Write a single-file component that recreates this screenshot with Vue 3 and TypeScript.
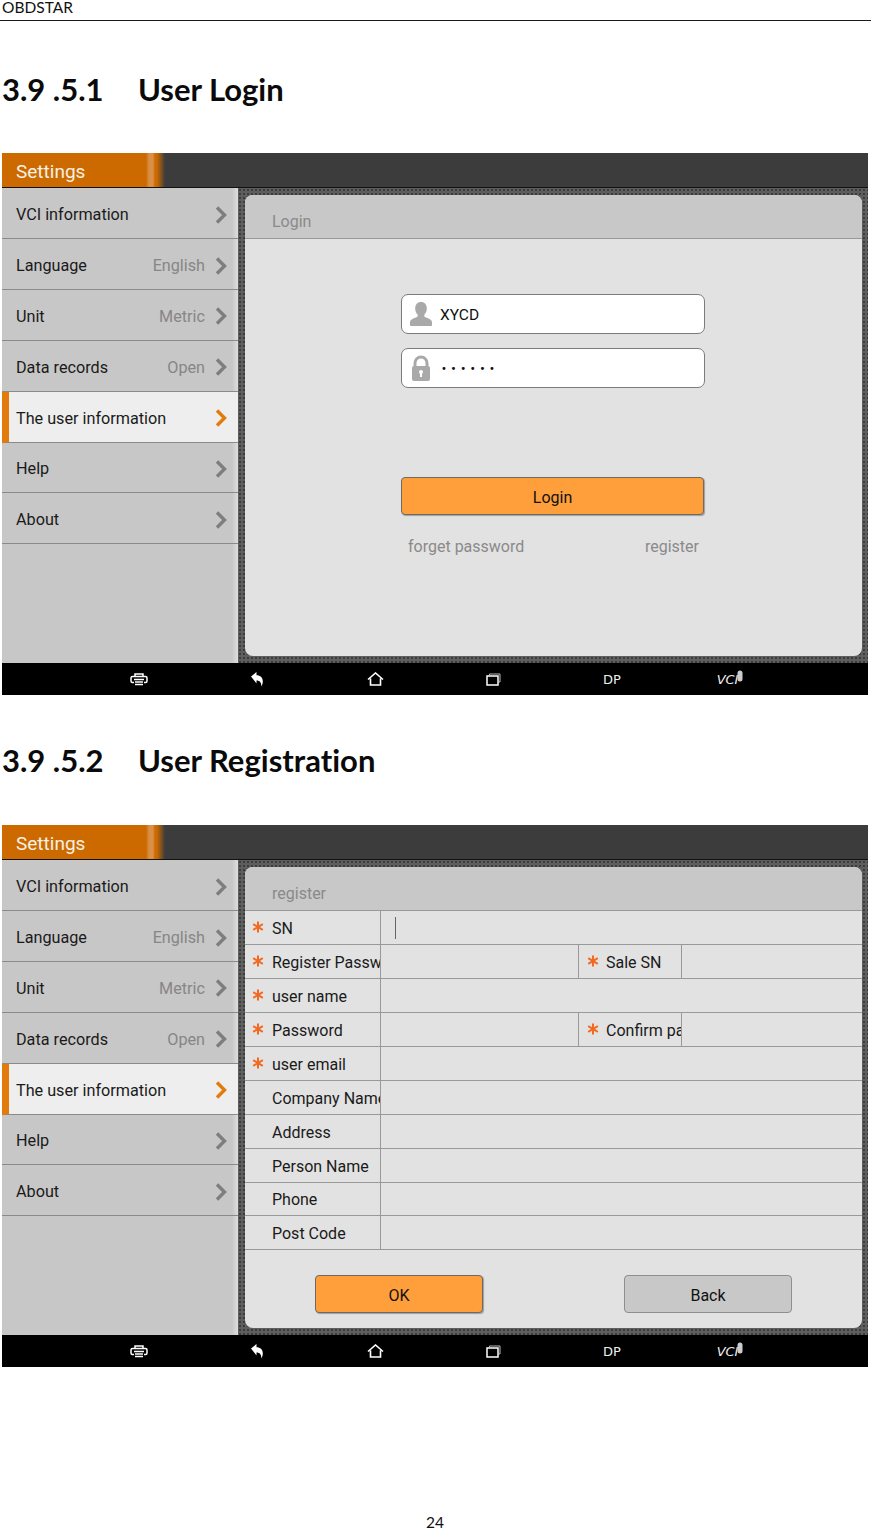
<script setup lang="ts">
interface MenuItem { label: string; value?: string; active?: boolean }
interface FormCell { label: string; required?: boolean }
interface FormRow { cells: FormCell[]; cursor?: boolean }

const menu: MenuItem[] = [
  { label: 'VCI information' },
  { label: 'Language', value: 'English' },
  { label: 'Unit', value: 'Metric' },
  { label: 'Data records', value: 'Open' },
  { label: 'The user information', active: true },
  { label: 'Help' },
  { label: 'About' },
]

const rows: FormRow[] = [
  { cells: [{ label: 'SN', required: true }], cursor: true },
  { cells: [{ label: 'Register Password', required: true }, { label: 'Sale SN', required: true }] },
  { cells: [{ label: 'user name', required: true }] },
  { cells: [{ label: 'Password', required: true }, { label: 'Confirm password', required: true }] },
  { cells: [{ label: 'user email', required: true }] },
  { cells: [{ label: 'Company Name' }] },
  { cells: [{ label: 'Address' }] },
  { cells: [{ label: 'Person Name' }] },
  { cells: [{ label: 'Phone' }] },
  { cells: [{ label: 'Post Code' }] },
]

const sections = [
  { number: '3.9 .5.1', title: 'User Login', kind: 'login' },
  { number: '3.9 .5.2', title: 'User Registration', kind: 'register' },
]
</script>

<template>
  <div class="page">
    <header class="doc-header">OBDSTAR</header>

    <section v-for="s in sections" :key="s.kind" class="section">
      <h2 class="heading"><span class="num">{{ s.number }}</span>{{ s.title }}</h2>

      <div class="screen">
        <div class="titlebar">
          <div class="title-tab">Settings</div>
        </div>

        <div class="main">
          <aside class="sidebar">
            <div v-for="m in menu" :key="m.label" class="menu-row" :class="{ active: m.active }">
              <span class="menu-label">{{ m.label }}</span>
              <span v-if="m.value" class="menu-value">{{ m.value }}</span>
              <svg class="chev" width="12" height="18" viewBox="0 0 12 18">
                <polyline points="2,1.5 9.5,9 2,16.5" fill="none" stroke-width="3.4" />
              </svg>
            </div>
          </aside>

          <div class="content">
            <div class="panel">
              <div class="panel-head">{{ s.kind === 'login' ? 'Login' : 'register' }}</div>

              <div v-if="s.kind === 'login'" class="login">
                <div class="field">
                  <svg width="24" height="26" viewBox="0 0 24 26" class="field-icon">
                    <path d="M12 1c3.700 0 5.800 2.700 5.800 6.400 0 2.600-1 4.900-2.500 6.300v1.800c1.500 1.100 7.700 2.300 7.700 5.700V24c0 .6-.5 1-1 1H2c-.5 0-1-.4-1-1v-2.800c0-3.400 6.200-4.600 7.700-5.700v-1.800C7.200 12.300 6.200 10 6.200 7.400 6.200 3.700 8.300 1 12 1z" fill="#a9a9a9" />
                  </svg>
                  <span class="field-text">XYCD</span>
                </div>
                <div class="field">
                  <svg width="24" height="26" viewBox="0 0 24 26" class="field-icon">
                    <path d="M6 12V8a6 6 0 0 1 12 0v4" fill="none" stroke="#a9a9a9" stroke-width="3" />
                    <rect x="3" y="11" width="18" height="15" rx="2" fill="#a9a9a9" />
                    <circle cx="12" cy="17" r="2" fill="#fff" />
                    <rect x="11" y="17" width="2" height="5" fill="#fff" />
                  </svg>
                  <span class="field-dots">••••••</span>
                </div>
                <button class="btn btn-orange login-btn" type="button">Login</button>
                <div class="login-links">
                  <span>forget password</span>
                  <span>register</span>
                </div>
              </div>

              <div v-else class="register">
                <div v-for="r in rows" :key="r.cells[0].label" class="form-row">
                  <template v-for="(c, i) in r.cells" :key="c.label">
                    <div class="form-label" :class="i === 1 ? 'second' : 'first'">
                      <svg v-if="c.required" class="star" width="12" height="12" viewBox="0 0 12 12">
                        <path d="M6 .5v11M1.200 3.200l9.600 5.600M10.800 3.200L1.200 8.800" stroke="#f26a21" stroke-width="2" fill="none" />
                      </svg>
                      <span class="form-text">{{ c.label }}</span>
                    </div>
                    <div class="form-value" :class="{ narrow: r.cells.length > 1 && i === 0 }">
                      <i v-if="r.cursor" class="cursor"></i>
                    </div>
                  </template>
                </div>
                <div class="form-actions">
                  <button class="btn btn-orange" type="button">OK</button>
                  <button class="btn btn-gray" type="button">Back</button>
                </div>
              </div>
            </div>
          </div>
        </div>

        <nav class="navbar">
          <svg width="18" height="14" viewBox="0 0 18 14">
            <path d="M5 4V2h8v2M2.500 4.500h13c1 0 1.500 .6 1.500 1.500v3c0 1-.5 1.500-1.500 1.500H14M4 10.500H2.500C1.500 10.500 1 10 1 9V6c0-.9.5-1.500 1.500-1.500M4 7.500h10M5 10h8M5 12.500h8" fill="none" stroke="#fff" stroke-width="1.500" />
          </svg>
          <svg width="14" height="16" viewBox="0 0 14 16">
            <path d="M1 5.500L6.500 1v3.200c3.800 0 6.300 2.300 6.300 6 0 2-.5 3.600-1.500 5.300.2-3.600-1.200-6-4.800-6V12.500z" fill="#fff" />
          </svg>
          <svg width="17" height="14" viewBox="0 0 17 14">
            <path d="M1 7.500L8.500 1 16 7.500M3.500 6.500v6.500h10V6.500" fill="none" stroke="#fff" stroke-width="1.600" />
          </svg>
          <svg width="15" height="13" viewBox="0 0 15 13">
            <path d="M3.500 2.500V1h10.500v8h-1.500" fill="none" stroke="#bbb" stroke-width="1" />
            <rect x="1" y="3" width="11" height="9" fill="none" stroke="#fff" stroke-width="1.500" />
          </svg>
          <span class="nav-dp">DP</span>
          <span class="nav-vci">VCI<svg width="6" height="12" viewBox="0 0 6 12" class="mic"><rect x=".5" y=".5" width="5" height="11" rx="2.500" fill="#ccc" /></svg></span>
        </nav>
      </div>
    </section>

    <footer class="doc-footer">24</footer>
  </div>
</template>

<style>
html, body { margin: 0; background: #fff; }
</style>

<style scoped>
.page {
  width: 871px;
  height: 1528px;
  display: flex;
  flex-direction: column;
  background: #fff;
  overflow: hidden;
  font-family: Roboto, "Liberation Sans", sans-serif;
}
.doc-header {
  height: 20px;
  box-sizing: content-box;
  border-bottom: 1px solid #1a1a1a;
  padding-left: 2px;
  font: 15.500px/14px Lato, sans-serif;
  color: #111;
}
.heading {
  margin: 0;
  height: 132px;
  box-sizing: border-box;
  padding: 49px 0 0 2px;
  font: 700 31px/38px Lato, sans-serif;
  font-variant-ligatures: none;
  color: #0a0a0a;
  display: flex;
}
.section + .section .heading {
  height: 130px;
  padding-top: 46px;
}
.num { width: 136px; }
.screen {
  margin-left: 2px;
  width: 866px;
  height: 542px;
  display: flex;
  flex-direction: column;
}
.titlebar {
  height: 35px;
  flex: none;
  box-sizing: border-box;
  border-bottom: 1px solid #111;
  background: #3c3c3c;
}
.title-tab {
  width: 164px;
  height: 34px;
  box-sizing: border-box;
  padding-left: 14px;
  font-size: 19px;
  line-height: 38px;
  color: #f6f0e6;
  background: linear-gradient(to right, #cc6a00 0, #cc6a00 144px, #d98f45 147px, #d98f45 151px, #cc6a00 153px, #cc6a00 155px, #3c3c3c 163px);
}
.main {
  flex: 1;
  min-height: 0;
  display: flex;
}
.sidebar {
  width: 236px;
  flex: none;
  box-sizing: border-box;
  padding-top: .4px;
  background: linear-gradient(to right, #c8c7c7 230px, #dedede 236px);
}
.menu-row {
  height: 50.830px;
  box-sizing: border-box;
  border-bottom: 1px solid #8b8b8b;
  padding: 3px 11px 0 14px;
  display: flex;
  align-items: center;
  font-size: 16.200px;
  color: #1a1a1a;
}
.menu-label { flex: 1; white-space: nowrap; }
.menu-value { color: #868686; margin-right: 10px; }
.chev { stroke: #7e7e7e; flex: none; }
.menu-row.active {
  background: #eeeeee;
  border-left: 7px solid #e27a0c;
  padding-left: 7px;
}
.active .chev { stroke: #e27a0c; }
.content {
  flex: 1;
  padding: 7px 6px 7px 7px;
  background-color: #5e5e5e;
  background-image: radial-gradient(circle at 2px 2px, #3c3c3c 1.2px, transparent 1.5px);
  background-size: 4px 4px;
  display: flex;
}
.panel {
  flex: 1;
  background: #e2e2e2;
  border-radius: 8px;
  overflow: hidden;
  display: flex;
  flex-direction: column;
}
.panel-head {
  height: 44px;
  flex: none;
  box-sizing: border-box;
  background: #c8c8c8;
  border-bottom: 1px solid #999;
  padding: 17px 0 0 27px;
  font-size: 16px;
  line-height: 20px;
  color: #8a8a8a;
}
.login {
  display: flex;
  flex-direction: column;
  padding: 55px 157px 0 156px;
}
.field {
  height: 40px;
  box-sizing: border-box;
  margin-bottom: 14px;
  border: 1px solid #7b7b7b;
  border-radius: 7px;
  background: #fff;
  display: flex;
  align-items: center;
  padding-left: 7px;
}
.field-icon { flex: none; }
.field-text {
  margin-left: 7px;
  padding-top: 1px;
  font-size: 15.500px;
  color: #111;
}
.field-dots {
  margin-left: 8px;
  font-family: "DejaVu Sans", sans-serif;
  font-size: 10px;
  letter-spacing: 3.700px;
  color: #111;
}
.btn {
  display: block;
  padding: 2px 0 0;
  font: 16px Roboto, sans-serif;
  color: #111;
  box-sizing: border-box;
  border-radius: 4px;
  width: 168px;
  height: 38px;
}
.btn-orange {
  background: #ff9f3c;
  border: 1px solid #6d6a66;
  box-shadow: 1px 1px 1px rgba(0, 0, 0, .3);
}
.btn-gray {
  background: #c8c8c8;
  border: 1px solid #8e8e8e;
}
.login-btn {
  width: 303px;
  margin-top: 75px;
}
.login-links {
  display: flex;
  justify-content: space-between;
  padding: 22px 6px 0 7px;
  font-size: 16px;
  line-height: 20px;
  color: #8a8a8a;
}
.register {
  display: flex;
  flex-direction: column;
  padding-top: .4px;
}
.form-row {
  height: 33.900px;
  box-sizing: border-box;
  border-bottom: 1px solid #999;
  display: flex;
  font-size: 16px;
  color: #1a1a1a;
}
.form-label {
  position: relative;
  box-sizing: border-box;
  overflow: hidden;
  white-space: nowrap;
  display: flex;
  align-items: center;
  border-right: 1px solid #999;
  flex: none;
}
.first { width: 136px; padding-left: 27px; }
.second { width: 103px; padding-left: 27px; }
.star { position: absolute; left: 7px; top: 10px; }
.second .star { left: 8px; }
.form-text { padding-top: 2px; }
.form-value {
  flex: 1;
  display: flex;
  align-items: center;
  padding-left: 14px;
}
.form-value.narrow {
  flex: none;
  width: 198px;
  box-sizing: border-box;
  border-right: 1px solid #999;
}
.cursor {
  display: block;
  width: 1px;
  height: 22px;
  background: #666;
}
.form-actions {
  display: flex;
  justify-content: space-between;
  padding: 25px 70px 0 70px;
}
.navbar {
  height: 32px;
  flex: none;
  background: #000;
  display: grid;
  grid-template-columns: repeat(6, 118.200px);
  padding-left: 78px;
  align-items: center;
  justify-items: center;
}
.nav-dp {
  font: 13px "DejaVu Sans", sans-serif;
  color: #eee;
}
.nav-vci {
  font: italic 13px "DejaVu Sans", sans-serif;
  color: #eee;
  display: flex;
  align-items: flex-start;
}
.mic { margin: -2px 0 0 -1px; }
.doc-footer {
  margin-top: auto;
  height: 13px;
  padding-left: 426px;
  font: 15.500px/14px Lato, sans-serif;
  color: #111;
}
</style>
